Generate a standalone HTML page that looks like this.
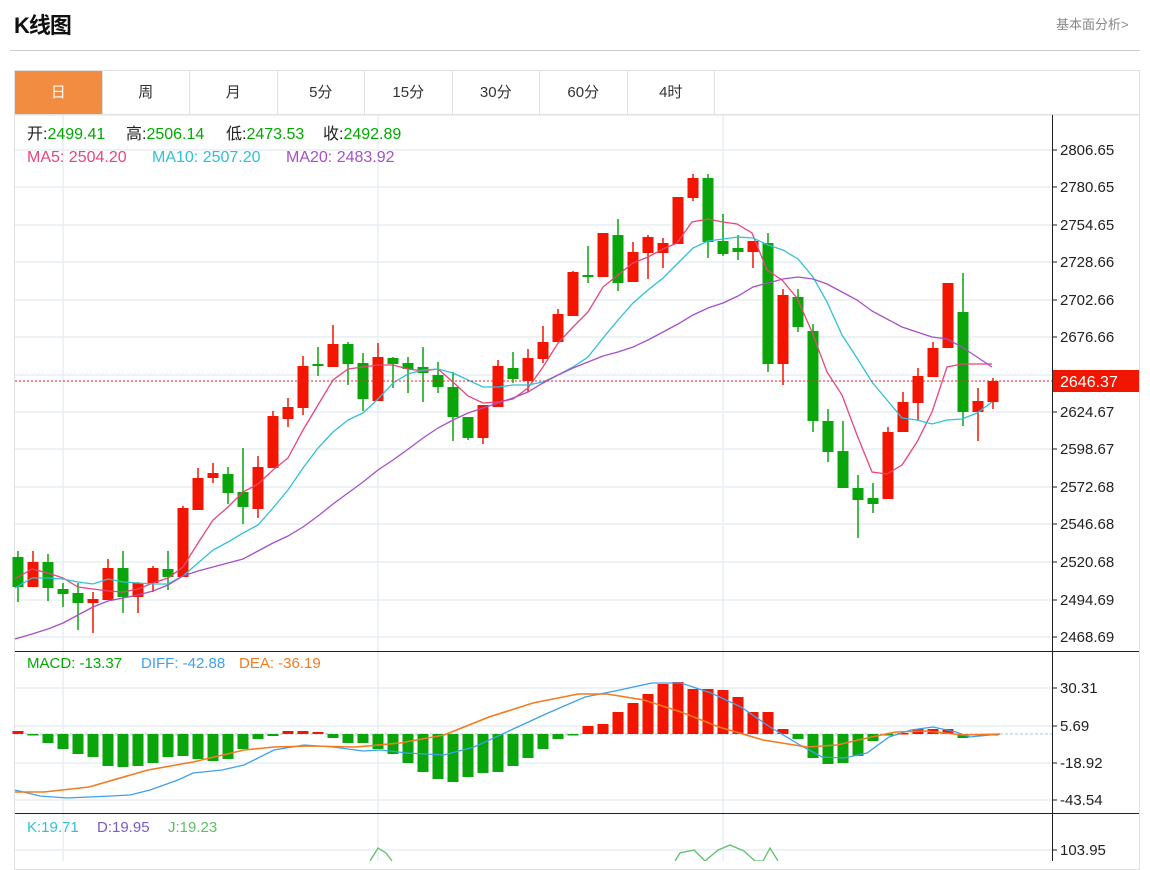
<!DOCTYPE html>
<html><head><meta charset="utf-8">
<style>
*{margin:0;padding:0;box-sizing:border-box}
body{width:1150px;height:861px;overflow:hidden;background:#fff;font-family:"Liberation Sans","Noto Sans CJK SC",sans-serif;position:relative}
.title{position:absolute;left:14px;top:8px;font-size:22px;font-weight:bold;color:#111;letter-spacing:-1px}
.more{position:absolute;left:1056px;top:14px;font-size:13px;color:#888}
.hr{position:absolute;left:10px;top:50px;width:1130px;height:1px;background:#ccc}
.box{position:absolute;left:14px;top:70px;width:1126px;height:800px;border:1px solid #e0e0e0}
.tabs{position:absolute;left:15px;top:71px;height:44px;display:flex;border-bottom:1px solid #e0e0e0;width:1124px}
.tabs div{width:87.5px;height:43px;line-height:43px;text-align:center;font-size:15px;color:#333;border-right:1px solid #e0e0e0}
.tabs div.on{background:#f28c40;color:#fff}
.i{position:absolute;font-size:16px;line-height:18px;white-space:nowrap}
.s{font-size:15px}
svg{position:absolute;left:0;top:0}
</style></head><body>
<div class="title">K线图</div>
<div class="more">基本面分析&gt;</div>
<div class="hr"></div>
<div class="box"></div>
<div class="tabs"><div class="on">日</div><div>周</div><div>月</div><div>5分</div><div>15分</div><div>30分</div><div>60分</div><div>4时</div></div>
<svg id="s" width="1150" height="861" xmlns="http://www.w3.org/2000/svg" font-family="Liberation Sans, sans-serif" font-size="14"></svg>
<div class="i" style="top:126px;left:27px;color:#222">开:<span style="color:#0a0">2499.41</span></div>
<div class="i" style="top:126px;left:126px;color:#222">高:<span style="color:#0a0">2506.14</span></div>
<div class="i" style="top:126px;left:226px;color:#222">低:<span style="color:#0a0">2473.53</span></div>
<div class="i" style="top:126px;left:323px;color:#222">收:<span style="color:#0a0">2492.89</span></div>
<div class="i" style="top:149px;left:27px;color:#e8457a">MA5:&nbsp;2504.20</div>
<div class="i" style="top:149px;left:152px;color:#2fc0d8">MA10:&nbsp;2507.20</div>
<div class="i" style="top:149px;left:286px;color:#a84fc8">MA20:&nbsp;2483.92</div>
<div class="i s" style="top:655px;left:27px;color:#0a0">MACD:&nbsp;-13.37</div>
<div class="i s" style="top:655px;left:141px;color:#3ea0ee">DIFF:&nbsp;-42.88</div>
<div class="i s" style="top:655px;left:239px;color:#f47a20">DEA:&nbsp;-36.19</div>
<div class="i s" style="top:819px;left:27px;color:#2fc0d8">K:19.71</div>
<div class="i s" style="top:819px;left:97px;color:#7a5cc8">D:19.95</div>
<div class="i s" style="top:819px;left:168px;color:#5cbf6a">J:19.23</div>
<script>
var s=document.getElementById('s'),h='';
var R='#f21500',G='#0aa50a';
var py=[150,187,225,262,300,337,375,412,449,487,524,562,600,637],
pl=['2806.65','2780.65','2754.65','2728.66','2702.66','2676.66','2650.67','2624.67','2598.67','2572.68','2546.68','2520.68','2494.69','2468.69'];
py.forEach(function(y){h+='<line x1="15" x2="1052" y1="'+y+'" y2="'+y+'" stroke="#e6edf3" stroke-width="1.5"/>';});
[688,726,763,800,850].forEach(function(y){h+='<line x1="15" x2="1052" y1="'+y+'" y2="'+y+'" stroke="#e6edf3" stroke-width="1.5"/>';});
[63,378,723].forEach(function(x){h+='<line x1="'+x+'" x2="'+x+'" y1="115" y2="861" stroke="#e6edf3" stroke-width="1.5"/>';});
h+='<line x1="15" x2="1139" y1="115" y2="115" stroke="#e0e0e0"/>';
h+='<line x1="1052.5" x2="1052.5" y1="115" y2="861" stroke="#222"/>';
h+='<line x1="15" x2="1139" y1="651.5" y2="651.5" stroke="#222"/>';
h+='<line x1="15" x2="1139" y1="813.5" y2="813.5" stroke="#222"/>';
py.forEach(function(y,i){h+='<line x1="1052" x2="1057" y1="'+y+'" y2="'+y+'" stroke="#222"/><text x="1060" y="'+(y+5)+'" fill="#222" font-size="15">'+pl[i]+'</text>';});
[[688,'30.31'],[726,'5.69'],[763,'-18.92'],[800,'-43.54'],[850,'103.95']].forEach(function(a){h+='<line x1="1052" x2="1057" y1="'+a[0]+'" y2="'+a[0]+'" stroke="#222"/><text x="1060" y="'+(a[0]+5)+'" fill="#222" font-size="15">'+a[1]+'</text>';});
var C=[['g',557,587,551,602],['r',562,587,551,587],['g',562,588,554,601],['g',589,594,583,607],['g',593,603,583,630],['r',599,603,592,633],['r',568,600,559,600],['g',568,597,551,613],['r',583,597,582,613],['r',568,583,566,592],['g',569,577,551,590],['r',508,577,506,577],['r',478,510,468,510],['r',473,478,463,483],['g',474,493,467,504],['g',492,507,448,524],['r',467,509,456,518],['r',416,468,411,468],['r',407,419,398,427],['r',366,408,356,415],['g',364,366,347,376],['r',344,367,325,367],['g',344,364,342,385],['g',363,399,353,411],['r',357,401,343,401],['g',358,364,357,388],['g',363,369,357,393],['g',367,373,347,402],['g',375,387,362,393],['g',387,417,372,441],['g',417,438,417,440],['r',405,438,405,444],['r',366,407,360,407],['g',368,379,352,383],['r',358,381,349,392],['r',342,359,326,363],['r',314,342,309,342],['r',272,316,271,316],['g',275,277,246,283],['r',233,277,233,277],['g',235,283,219,291],['r',252,282,242,282],['r',237,253,235,279],['r',243,253,238,268],['r',197,244,197,244],['r',178,198,174,201],['g',178,242,174,258],['g',241,254,214,256],['g',248,252,235,260],['r',241,252,241,268],['g',243,364,233,372],['r',295,364,289,385],['g',297,327,289,332],['g',331,421,324,432],['g',421,452,409,462],['g',451,488,421,488],['g',488,500,475,538],['g',498,504,483,513],['r',432,499,427,499],['r',402,432,392,432],['r',376,403,368,420],['r',348,377,342,377],['r',283,348,283,348],['g',312,412,273,426],['r',401,412,388,441],['r',381,402,378,409]];
C.forEach(function(c,i){var x=18+15*i,col=c[0]=='r'?R:G;
h+='<line x1="'+x+'" x2="'+x+'" y1="'+c[3]+'" y2="'+c[4]+'" stroke="'+col+'" stroke-width="1.5"/>';
h+='<rect x="'+(x-5.5)+'" y="'+c[1]+'" width="11" height="'+Math.max(2,c[2]-c[1])+'" fill="'+col+'"/>';});
function pl2(p,col,w){h+='<polyline fill="none" stroke="'+col+'" stroke-width="'+(w||1.3)+'" points="'+p+'"/>';}
pl2('15,579 32,569 48,573 63,578 78,587 93,589 108,591 123,592 138,589 153,583 168,578 183,567 198,543 213,520 228,507 243,492 258,484 273,470 288,458 303,430 318,405 333,380 348,369 363,367 378,365 393,365 408,369 423,371 438,369 453,382 468,396 483,403 498,402 513,399 528,388 543,367 558,343 573,327 588,312 603,287 618,275 633,263 648,257 663,249 677,243 692,222 708,219 723,222 737,224 752,233 767,270 782,280 797,298 812,332 827,372 842,395 857,435 872,472 887,474 902,465 917,442 932,412 947,367 962,364 977,364 992,364','#e8457a');
pl2('15,588 32,578 48,578 63,579 78,582 93,584 108,579 123,582 138,583 153,584 168,584 183,576 198,563 213,550 228,542 243,533 258,525 273,508 288,490 303,468 318,448 333,432 348,420 363,413 378,399 393,383 408,374 423,370 438,369 453,373 468,380 483,387 498,387 513,385 528,385 543,382 558,375 573,367 588,357 603,338 618,320 633,303 648,290 663,278 678,263 693,248 708,241 723,239 738,237 753,238 768,245 783,250 798,259 813,277 827,302 842,335 857,358 872,382 887,400 902,418 917,420 932,424 947,420 962,419 977,413 992,402','#2fc0d8');
pl2('15,639 32,634 48,629 63,623 78,615 93,607 108,601 123,598 138,595 153,591 168,585 183,576 198,571 213,567 228,563 243,559 258,551 273,543 288,536 303,527 318,516 333,504 348,493 363,482 378,470 393,460 407,450 423,438 438,428 453,420 468,413 483,408 498,403 513,398 528,392 543,383 558,375 573,368 588,362 603,356 618,352 633,347 648,340 663,332 678,324 693,315 708,308 723,303 738,296 753,287 768,283 783,279 798,277 813,279 827,284 842,292 857,300 872,311 887,319 902,327 917,332 932,337 947,339 962,347 977,357 992,367','#a84fc8');
h+='<line x1="15" x2="1052" y1="381" y2="381" stroke="#e22" stroke-dasharray="2,2"/>';
h+='<rect x="1053" y="370" width="86" height="22" fill="#f21500"/><text x="1060" y="387" fill="#fff" font-size="16">2646.37</text>';
h+='<line x1="15" x2="1052" y1="734" y2="734" stroke="#9cc8e0" stroke-dasharray="3,2"/>';
var M=[731,735,743,749,754,757,766,767,766,763,757,756,759,761,759,749,739,736,731,731,732,738,743,743,749,754,763,772,779,782,777,773,772,766,758,749,739,735,726,724,712,703,694,684,682,689,689,690,697,712,712,729,739,758,764,763,756,741,735,733,729,729,729,738,735,735];
M.forEach(function(y,i){var x=18+15*i,col=y<734?R:G,t=Math.min(y,734),hh=Math.max(1.5,Math.abs(y-734));
h+='<rect x="'+(x-5.5)+'" y="'+t+'" width="11" height="'+hh+'" fill="'+col+'"/>';});
pl2('15,790 40,796 67,798 111,796 130,795 150,790 178,780 193,773 222,770 244,765 274,750 304,745 333,747 363,751 381,750 407,753 444,755 474,747 511,730 548,713 585,697 615,691 652,683 681,683 711,693 741,707 770,727 800,745 822,757 844,758 867,753 889,737 911,730 933,727 956,732 970,737 1000,734','#3ea0ee');
pl2('15,792 44,792 89,787 148,770 193,762 244,750 274,747 311,746 356,747 400,743 444,735 489,717 533,703 578,694 607,694 644,700 681,712 719,727 763,740 807,747 837,745 867,738 896,732 926,731 963,735 1000,734','#f47a20',1.6);
pl2('370,861 378,848 386,853 392,861','#5cbf6a');
pl2('675,861 680,853 694,850 705,861 718,850 730,845 744,851 755,861 763,861 770,848 778,861','#5cbf6a');
s.innerHTML=h;
</script>
</body></html>
